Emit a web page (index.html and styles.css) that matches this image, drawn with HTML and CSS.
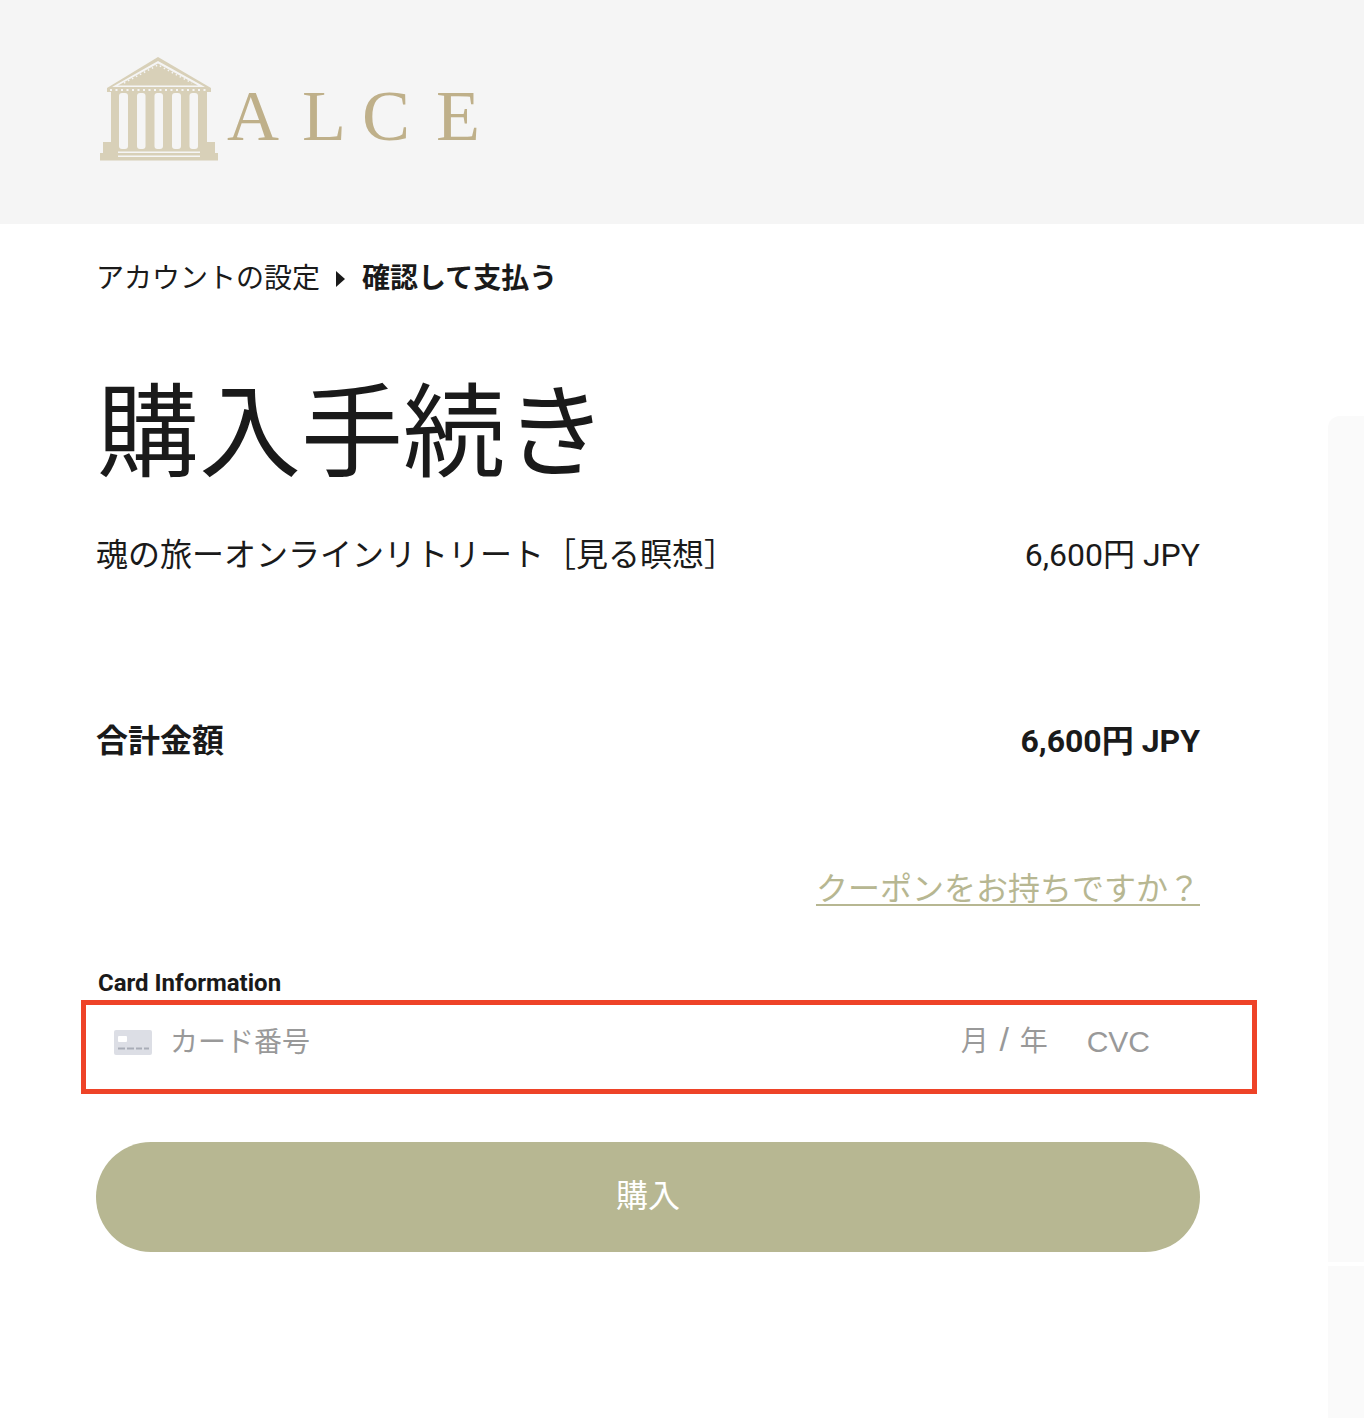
FILE: index.html
```html
<!DOCTYPE html>
<html lang="ja">
<head>
<meta charset="utf-8">
<title>購入手続き</title>
<link rel="stylesheet" href="styles.css">
</head>
<body>
<header class="site-header">
  <div class="logo">
    <svg class="temple" viewBox="100 56 118 105" width="118" height="105" aria-hidden="true">
      <path class="t" d="M158 57L211 88V92H107V88z"/>
      <path class="t" d="M111 91H207V150H111z"/>
      <path class="t" d="M103 142h15v11h-15zM200 142h15v11h-15zM100 153h118v7.500H100zM118 149h82v4h-82z"/>
      <path class="w" d="M158 61L205 87H112zM158 63.500L118 85.500H198z"/>
      <path class="d" d="M158 65.500L122 85H194z"/>
      <rect class="w" x="119" y="93" width="9" height="56" rx="3"/>
      <rect class="w" x="137" y="93" width="8.500" height="56" rx="3"/>
      <rect class="w" x="154.500" y="93" width="8.500" height="56" rx="3"/>
      <rect class="w" x="172" y="93" width="9" height="56" rx="3"/>
      <rect class="w" x="189.500" y="93" width="8.500" height="56" rx="3"/>
      <path class="dots" d="M110 90H208"/>
      <path class="dots2" d="M124 83L158 65 192 83"/>
      <path class="w" d="M118 151.500h82v1.500h-82zM118 155.500h82v1.500h-82z"/>
    </svg>
    <span class="wordmark">A<span class="wm-l">L</span><span class="wm-c">C</span>E</span>
  </div>
</header>
<main class="content">
  <nav class="crumbs">
    <span>アカウントの設定</span>
    <svg class="crumb-arrow" viewBox="0 0 9 16" width="9" height="16" aria-hidden="true"><path d="M0 0l9 8-9 8z"/></svg>
    <strong>確認して支払う</strong>
  </nav>
  <h1 class="title">購入手続き</h1>
  <div class="line">
    <span>魂の旅ーオンラインリトリート［見る瞑想］</span>
    <span class="price">6,600円 JPY</span>
  </div>
  <div class="line total">
    <span>合計金額</span>
    <span class="price">6,600円 JPY</span>
  </div>
  <div class="coupon-row"><a class="coupon" href="#">クーポンをお持ちですか？</a></div>
  <label class="card-label">Card Information</label>
  <div class="card-box">
    <svg class="card-icon" viewBox="0 0 38 25" width="38" height="25" aria-hidden="true">
      <rect class="ci-bg" width="38" height="25" rx="2"/>
      <rect class="ci-w" x="4" y="6" width="9" height="6" rx="1"/>
      <path class="ci-d" d="M4 18.500h7M13 18.500h7M22 18.500h6M30 18.500h5"/>
    </svg>
    <span class="ph ph-num">カード番号</span>
    <span class="ph ph-exp">月 <span class="ph-slash">/</span> 年</span>
    <span class="ph ph-cvc">CVC</span>
  </div>
  <button class="buy" type="button">購入</button>
</main>
<aside class="side">
  <div class="side-a"></div>
  <div class="side-b"></div>
</aside>
</body>
</html>
```
FILE: styles.css
```css
* { box-sizing: border-box; }
html, body { margin: 0; padding: 0; }
body {
  position: relative;
  height: 1418px;
  overflow: hidden;
  background: #fff;
  color: #1a1a1a;
  font-family: Roboto, "Noto Sans CJK JP", sans-serif;
}
.site-header {
  height: 224px;
  background: #f5f5f5;
  padding: 56px 0 0 100px;
}
.logo { display: flex; align-items: flex-start; }
.temple { display: block; flex: none; }
.t, .d { fill: #d8d0b8; }
.w { fill: #f5f5f5; }
.dots { stroke: #f5f5f5; stroke-width: 2; stroke-dasharray: 2 3.500; fill: none; }
.dots2 { stroke: #f5f5f5; stroke-width: 1.500; stroke-dasharray: 1.500 3; fill: none; }
.wordmark {
  margin: 16px 0 0 9px;
  font-family: "Liberation Serif", serif;
  font-size: 72px;
  line-height: 88px;
  letter-spacing: 23px;
  color: #bfb08a;
}
.wm-l { letter-spacing: 16px; }
.wm-c { letter-spacing: 26px; }
.content {
  width: 1200px;
  padding: 0 0 0 96px;
}
.crumbs {
  display: flex;
  align-items: center;
  height: 42px;
  margin-top: 34px;
  font-size: 28px;
  line-height: 42px;
}
.crumbs strong { font-weight: 700; }
.crumb-arrow { flex: none; margin: 0 17px 0 16px; }
.crumb-arrow path { fill: #1a1a1a; }
.title {
  margin: 59px 0 0 1px;
  font-size: 102px;
  font-weight: 400;
  line-height: 150px;
}
.line {
  display: flex;
  justify-content: space-between;
  margin-top: 22px;
  font-size: 32px;
  line-height: 48px;
}
.total { margin-top: 138px; font-weight: 700; }
.coupon-row {
  display: flex;
  justify-content: flex-end;
  margin-top: 100px;
}
.coupon {
  color: #b7b792;
  font-size: 32px;
  line-height: 48px;
  text-decoration: underline;
  text-decoration-thickness: 2px;
  text-underline-offset: 4px;
}
.card-label {
  display: block;
  margin-top: 53px;
  padding-left: 2px;
  font-size: 24px;
  font-weight: 700;
  line-height: 34px;
}
.card-box {
  position: relative;
  display: flex;
  align-items: flex-start;
  width: 1176px;
  height: 94px;
  margin: 0 0 0 -15px;
  padding: 25px 0 0 28px;
  border: 5px solid #ee4328;
  background: #fff;
}
.card-icon { flex: none; display: block; }
.ci-bg { fill: #dcdee5; }
.ci-w { fill: #fff; }
.ci-d { stroke: #a9adb8; stroke-width: 2; fill: none; }
.ph {
  color: #999;
  font-family: "Liberation Sans", "Noto Sans CJK JP", sans-serif;
  font-size: 30px;
  line-height: 24px;
  white-space: nowrap;
}
.ph-num { margin: 1px 0 0 18px; flex: 1; font-size: 28px; }
.ph-exp { font-size: 28px; word-spacing: 3px; line-height: 24px; }
.ph-slash { font-size: 34px; line-height: 0; }
.ph-cvc { margin: 0 102px 0 39px; }
.buy {
  display: block;
  width: 1104px;
  height: 110px;
  margin-top: 48px;
  padding: 0 0 8px;
  border: 0;
  border-radius: 55px;
  background: #b7b792;
  color: #fff;
  font-family: inherit;
  font-size: 32px;
}
.side {
  position: absolute;
  left: 1328px;
  top: 416px;
  width: 36px;
  height: 1002px;
  display: flex;
  flex-direction: column;
  gap: 4px;
}
.side-a { height: 846px; background: #fafafa; border-top-left-radius: 12px; }
.side-b { flex: 1; background: #fafafa; }
```
